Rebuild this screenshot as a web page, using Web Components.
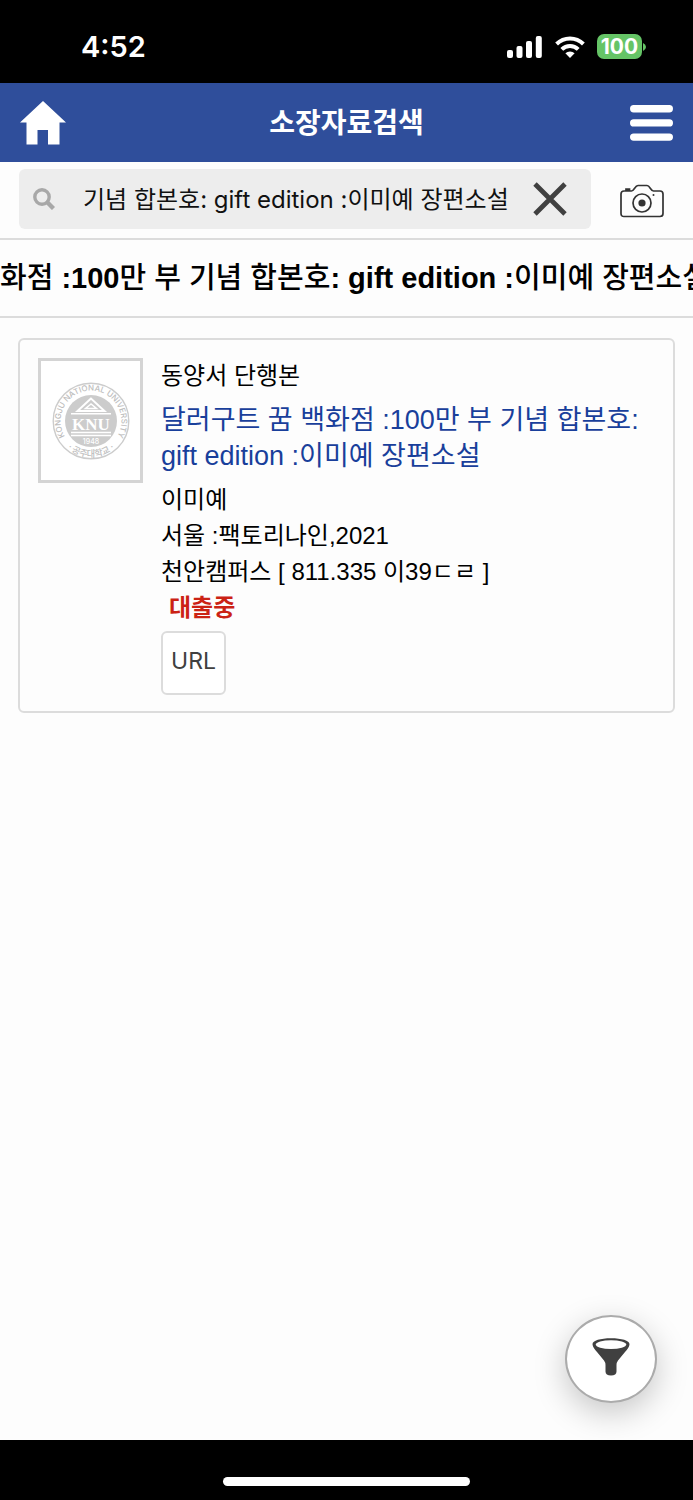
<!DOCTYPE html>
<html lang="ko">
<head>
<meta charset="utf-8">
<meta name="viewport" content="width=device-width, initial-scale=1">
<title>소장자료검색</title>
<style>
  :root {
    --ui: Inter, "Noto Sans CJK KR", sans-serif;
    --text: "Liberation Sans", "Noto Sans CJK KR", sans-serif;
    --line: #dcdcdc;
    --brand: #2f4e9b;
  }
  body {
    margin: 0;
    min-height: 100vh;
    display: flex;
    flex-direction: column;
    background: #fdfdfd;
    color: #000;
    font-family: var(--text);
  }
  main { flex: 1; padding: 20px 18px; }
</style>
</head>
<body>
<status-bar time="4:52" battery="100"></status-bar>
<app-header>소장자료검색</app-header>
<search-bar value="기념 합본호: gift edition :이미예 장편소설"></search-bar>
<title-ticker>화점 <b>:100</b>만 부 기념 합본호<b>: gift edition :</b>이미예 장편소설</title-ticker>
<main>
  <book-card>
    <span slot="kind">동양서 단행본</span>
    <span slot="title">달러구트 꿈 백화점 :100만 부 기념 합본호: gift edition :이미예 장편소설</span>
    <span slot="author">이미예</span>
    <span slot="publisher">서울 :팩토리나인,2021</span>
    <span slot="location">천안캠퍼스 [ 811.335 이39ㄷㄹ ]</span>
    <span slot="state">대출중</span>
  </book-card>
</main>
<filter-button></filter-button>
<home-indicator></home-indicator>

<script>
class BaseElement extends HTMLElement {
  constructor() {
    super();
    this
      .attachShadow({ mode: "open" })
      .innerHTML = this.content;
  }
}

class StatusBar extends BaseElement {
  connectedCallback() {
    this.shadowRoot.querySelector("#time").textContent = this.getAttribute("time");
    this.shadowRoot.querySelector("#level").textContent = this.getAttribute("battery");
  }

  get content() {
    return `
  <style>
    :host {
      display: flex;
      align-items: center;
      justify-content: space-between;
      box-sizing: border-box;
      height: 83px;
      padding: 10px 47px 0 81px;
      background: #000;
      color: #fff;
      font-family: var(--ui);
    }
    #time { font-size: 29px; font-weight: 600; }
    #icons { display: flex; align-items: center; gap: 12px; }
    svg { display: block; }
    #battery { display: flex; align-items: center; gap: 1px; }
    #level {
      width: 45px;
      border-radius: 7px;
      background: #65c466;
      font-size: 21px;
      line-height: 25px;
      font-weight: 700;
      text-align: center;
    }
  </style>
  <span id="time"></span>
  <div id="icons">
    <svg width="36" height="22" viewBox="0 0 36 22" fill="#fff">
      <rect x="0" y="14" width="6" height="8" rx="2"/>
      <rect x="9.5" y="10" width="6" height="12" rx="2"/>
      <rect x="19" y="5" width="6" height="17" rx="2"/>
      <rect x="28.8" y="0" width="6" height="22" rx="2"/>
    </svg>
    <svg width="30" height="22" viewBox="0 0 30 22" fill="none" stroke="#fff" stroke-width="4">
      <path d="M1.6 8A19.2 19.2 0 0 1 28.4 8"/>
      <path d="M6.8 13.4A11.7 11.7 0 0 1 23.2 13.4"/>
      <path d="M15 22 10.4 17.3A6.6 6.6 0 0 1 19.6 17.3Z" fill="#fff" stroke="none"/>
    </svg>
    <div id="battery">
      <span id="level"></span>
      <svg width="3" height="8" viewBox="0 0 3 8"><path d="M0 0Q3 1.5 3 4T0 8Z" fill="#65c466"/></svg>
    </div>
  </div>`;
  }
}

class AppHeader extends BaseElement {
  get content() {
    return `
  <style>
    :host {
      display: flex;
      align-items: center;
      justify-content: space-between;
      box-sizing: border-box;
      height: 79px;
      padding: 0 20px;
      background: var(--brand);
      color: #fff;
      font-family: var(--ui);
    }
    h1 { margin: 0; font-size: 28px; line-height: 40px; font-weight: 700; }
    a, button { width: 46px; }
    button { display: grid; justify-items: end; padding: 0; border: 0; background: none; }
    svg { display: block; }
  </style>
  <a href="#" aria-label="홈">
    <svg width="46" height="44" viewBox="0 0 46 44" fill="#fff">
      <path d="M23 0 46 21.5H39.5V43.5H28V29H17.5V43.5H6.5V21.5H0Z"/>
    </svg>
  </a>
  <h1><slot></slot></h1>
  <button type="button" aria-label="메뉴">
    <svg width="43" height="36" viewBox="0 0 43 36" fill="#fff">
      <rect width="43" height="7.4" rx="3.7"/>
      <rect y="14.2" width="43" height="7.4" rx="3.7"/>
      <rect y="28.4" width="43" height="7.4" rx="3.7"/>
    </svg>
  </button>`;
  }
}

class SearchBar extends BaseElement {
  connectedCallback() {
    const input = this.shadowRoot.querySelector("input");
    input.value = this.getAttribute("value");
    this.shadowRoot.querySelector("#clear").addEventListener("click", () => {
      input.value = "";
      input.focus();
    });
  }

  get content() {
    return `
  <style>
    :host {
      display: flex;
      padding: 7px 0 9px 19px;
      border-bottom: 2px solid var(--line);
    }
    #box {
      flex: 1;
      min-width: 0;
      display: flex;
      align-items: center;
      height: 60px;
      box-sizing: border-box;
      padding: 0 24px 0 14px;
      border-radius: 6px;
      background: #ededed;
    }
    input {
      flex: 1;
      min-width: 0;
      height: 40px;
      margin: 0 20px 4px 28px;
      padding: 0;
      border: 0;
      outline: 0;
      background: none;
      color: #111;
      font-family: var(--ui);
      font-size: 24px;
    }
    button { padding: 0; border: 0; background: none; }
    #camera { width: 102px; padding-top: 4px; display: grid; place-items: center; }
    svg { display: block; }
  </style>
  <div id="box">
    <svg width="22" height="22" viewBox="0 0 22 22" fill="none" stroke="#a8a8a8" stroke-width="3.4">
      <circle cx="9" cy="9" r="7.2"/>
      <path d="M14 14 20.5 20.5" stroke-width="4.4"/>
    </svg>
    <input type="text" aria-label="검색어">
    <button type="button" id="clear" aria-label="지우기">
      <svg width="34" height="34" viewBox="0 0 34 34" stroke="#404040" stroke-width="4.8">
        <path d="M2 2 32 32M32 2 2 32"/>
      </svg>
    </button>
  </div>
  <button type="button" id="camera" aria-label="카메라">
    <svg width="44" height="34" viewBox="0 0 44 34" fill="none" stroke="#333" stroke-width="1.7">
      <path d="M4 7H11.5C14 7 15 1.5 18 1.5H27C30 1.5 30.5 7 33.5 7H40Q43 7 43 10V29.5Q43 32.5 40 32.5H4Q1 32.5 1 29.5V10Q1 7 4 7Z"/>
      <path d="M6 7V5H9.5V7" fill="#333"/>
      <circle cx="22" cy="19" r="9"/>
      <circle cx="22" cy="19" r="3.6" fill="#333" stroke="none"/>
      <circle cx="33.5" cy="11" r="1" fill="#333" stroke="none"/>
    </svg>
  </button>`;
  }
}

class TitleTicker extends BaseElement {
  get content() {
    return `
  <style>
    :host {
      display: block;
      overflow: hidden;
      white-space: nowrap;
      border-bottom: 2px solid var(--line);
      font-size: 29px;
      line-height: 76px;
      font-weight: 500;
    }
  </style>
  <slot></slot>`;
  }
}

class SchoolEmblem extends BaseElement {
  get content() {
    return `
  <style>
    :host { display: block; }
    svg { display: block; }
    text { font-family: var(--ui); font-weight: 500; fill: #bdbdbd; }
    .cut { fill: #fff; }
  </style>
  <svg width="78" height="78" viewBox="-39 -39 78 78" role="img" aria-label="공주대학교">
    <defs>
      <path id="top" d="M-22 21A30.400 30.400 0 1 1 22 21"/>
      <path id="bottom" d="M-26 25A36 36 0 0 0 26 25"/>
    </defs>
    <circle r="37.8" fill="#fff" stroke="#ccc" stroke-width="1.4"/>
    <circle r="26" fill="#ccc"/>
    <text font-size="8"><textPath href="#top" startOffset="50%" text-anchor="middle">KONGJU NATIONAL UNIVERSITY</textPath></text>
    <text font-size="9"><textPath href="#bottom" startOffset="50%" text-anchor="middle">· 공주대학교 ·</textPath></text>
    <path d="M0-22.5-13.5-10H13.5Z" fill="none" stroke="#fff" stroke-width="2"/>
    <path d="M0-17-5.500-12.500H5.500Z" fill="#ccc" stroke="#fff" stroke-width="1.500"/>
    <path d="M-20-7.2H20M-20 11.5H20M-20 14.5H20" stroke="#fff" stroke-width="1.5"/>
    <text class="cut" y="9" font-size="17" text-anchor="middle" style="font-family:'Liberation Serif',serif;font-weight:700">KNU</text>
    <text class="cut" y="22.5" font-size="7" text-anchor="middle">1948</text>
  </svg>`;
  }
}

class BookCard extends BaseElement {
  get content() {
    return `
  <style>
    :host {
      display: flex;
      gap: 18px;
      padding: 18px 18px 16px;
      border: 2px solid var(--line);
      border-radius: 6px;
      font-size: 24px;
      line-height: 36px;
    }
    #cover {
      flex: none;
      display: grid;
      place-items: center;
      box-sizing: border-box;
      width: 105px;
      height: 125px;
      border: 3px solid #d4d4d4;
      background: #fff;
    }
    #info { flex: 1; min-width: 0; }
    p { margin: 0; }
    h2 { margin: 8px 0; font-size: 27px; font-weight: 400; }
    h2 a { color: #193f9b; text-decoration: none; }
    #state { padding-left: 8px; color: #cb2214; font-weight: 700; }
    button {
      display: block;
      width: 65px;
      height: 64px;
      margin-top: 5px;
      padding: 0 0 4px;
      border: 2px solid var(--line);
      border-radius: 6px;
      background: #fff;
      color: #404040;
      font-family: var(--ui);
      font-size: 23px;
    }
  </style>
  <div id="cover"><school-emblem></school-emblem></div>
  <div id="info">
    <p><slot name="kind"></slot></p>
    <h2><a href="#"><slot name="title"></slot></a></h2>
    <p><slot name="author"></slot></p>
    <p><slot name="publisher"></slot></p>
    <p><slot name="location"></slot></p>
    <p id="state"><slot name="state"></slot></p>
    <button type="button">URL</button>
  </div>`;
  }
}

class FilterButton extends BaseElement {
  get content() {
    return `
  <style>
    /* floats over the list, above the home indicator */
    :host { position: fixed; right: 36px; bottom: 97px; }
    button {
      display: grid;
      place-items: center;
      width: 92px;
      height: 88px;
      padding: 0 0 4px;
      border: 2px solid #ababab;
      border-radius: 50%;
      background: #fff;
      box-shadow: 0 10px 32px rgba(0, 0, 0, .22);
    }
  </style>
  <button type="button" aria-label="필터">
    <svg width="38" height="38" viewBox="0 0 38 38" fill="#404040">
      <path d="M.5 6.2C.5 2.6 8.5.3 19 .3S37.5 2.6 37.5 6.2C37.5 9 35 11.5 33 14L26 22.5Q24.500 24.500 24.500 27V33.500Q24.500 37.500 19 37.500T13.500 33.500V27Q13.500 24.500 12 22.500L5 14C3 11.500.5 9 .5 6.200Z"/>
      <ellipse cx="19" cy="6.6" rx="15.3" ry="4.3" fill="#fff"/>
    </svg>
  </button>`;
  }
}

class HomeIndicator extends BaseElement {
  get content() {
    return `
  <style>
    :host {
      display: flex;
      align-items: flex-end;
      justify-content: center;
      box-sizing: border-box;
      height: 60px;
      padding-bottom: 14px;
      background: #000;
    }
    div { width: 247px; height: 9px; border-radius: 5px; background: #fff; }
  </style>
  <div></div>`;
  }
}

customElements.define("status-bar", StatusBar);
customElements.define("app-header", AppHeader);
customElements.define("search-bar", SearchBar);
customElements.define("title-ticker", TitleTicker);
customElements.define("school-emblem", SchoolEmblem);
customElements.define("book-card", BookCard);
customElements.define("filter-button", FilterButton);
customElements.define("home-indicator", HomeIndicator);
</script>
</body>
</html>
